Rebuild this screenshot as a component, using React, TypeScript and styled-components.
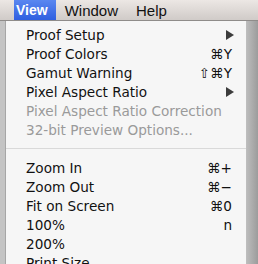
import React from "react";
import styled, { createGlobalStyle } from "styled-components";

const Global = createGlobalStyle`
  html, body { margin: 0; padding: 0; }
  body {
    width: 258px; height: 264px; overflow: hidden;
    background: linear-gradient(90deg, #b9b9b9 0%, #b9b9b9 96%, #9c9c9c 100%);
    font-family: "DejaVu Sans", "Liberation Sans", sans-serif;
  }
`;

const Screen = styled.div`
  display: flex;
  flex-direction: column;
  width: 258px;
  height: 264px;
  overflow: hidden;
`;

const MenuBar = styled.div`
  display: flex;
  align-items: stretch;
  height: 21px;
  padding-left: 14px;
  background: linear-gradient(#ece7e4, #d0cbc8);
  border-bottom: 1px solid #8f8c8a;
  box-sizing: border-box;
  flex-shrink: 0;
  font-family: "Liberation Sans", sans-serif;
`;

const BarItem = styled.div<{ $active?: boolean }>`
  display: flex;
  align-items: center;
  padding: ${(p) => (p.$active ? "0 8px 0 2px" : "0 9px")};
  font-size: ${(p) => (p.$active ? "14px" : "15px")};
  color: ${(p) => (p.$active ? "#ffffff" : "#111")};
  font-weight: ${(p) => (p.$active ? "bold" : "normal")};
  background: ${(p) =>
    p.$active ? "linear-gradient(#5a87f0, #2f5fe0)" : "transparent"};
`;

const Below = styled.div`
  display: flex;
  flex: 1;
`;

const LeftGutter = styled.div`
  width: 5px;
  flex-shrink: 0;
  background: #c4c4c4;
`;

const Menu = styled.div`
  width: 242px;
  background: #f6f6f6;
  border-left: 1px solid #a6a6a6;
  border-right: 1px solid #bdbdbd;
  padding-top: 4px;
  box-sizing: border-box;
  flex-shrink: 0;
`;

const Row = styled.div<{ $disabled?: boolean }>`
  display: flex;
  align-items: center;
  justify-content: space-between;
  height: 19px;
  padding: 0 11px 0 20px;
  font-size: 13.6px;
  color: ${(p) => (p.$disabled ? "#9a9a9a" : "#111")};
  white-space: nowrap;
`;

const Shortcut = styled.span`
  font-family: "DejaVu Sans", sans-serif;
  font-size: 13.6px;
  color: #111;
  margin-right: 3px;
`;

const Arrow = styled.span`
  width: 0;
  height: 0;
  border-top: 5px solid transparent;
  border-bottom: 5px solid transparent;
  border-left: 8px solid #3c3c3c;
  margin-right: 1px;
`;

const Separator = styled.div`
  height: 19px;
  display: flex;
  align-items: center;
  &::after {
    content: "";
    display: block;
    width: 100%;
    height: 1px;
    background: #d9d9d9;
  }
`;

type Item =
  | { sep: true }
  | { label: string; key?: string; sub?: boolean; disabled?: boolean };

const items: Item[] = [
  { label: "Proof Setup", sub: true },
  { label: "Proof Colors", key: "⌘Y" },
  { label: "Gamut Warning", key: "⇧⌘Y" },
  { label: "Pixel Aspect Ratio", sub: true },
  { label: "Pixel Aspect Ratio Correction", disabled: true },
  { label: "32-bit Preview Options...", disabled: true },
  { sep: true },
  { label: "Zoom In", key: "⌘+" },
  { label: "Zoom Out", key: "⌘−" },
  { label: "Fit on Screen", key: "⌘0" },
  { label: "100%", key: "n" },
  { label: "200%" },
  { label: "Print Size" },
];

export default function App() {
  return (
    <Screen>
      <Global />
      <MenuBar>
        <BarItem $active>View</BarItem>
        <BarItem>Window</BarItem>
        <BarItem>Help</BarItem>
      </MenuBar>
      <Below>
        <LeftGutter />
        <Menu>
          {items.map((it, i) =>
            "sep" in it ? (
              <Separator key={i} />
            ) : (
              <Row key={i} $disabled={it.disabled}>
                <span>{it.label}</span>
                {it.sub ? <Arrow /> : it.key ? <Shortcut>{it.key}</Shortcut> : null}
              </Row>
            )
          )}
        </Menu>
      </Below>
    </Screen>
  );
}
